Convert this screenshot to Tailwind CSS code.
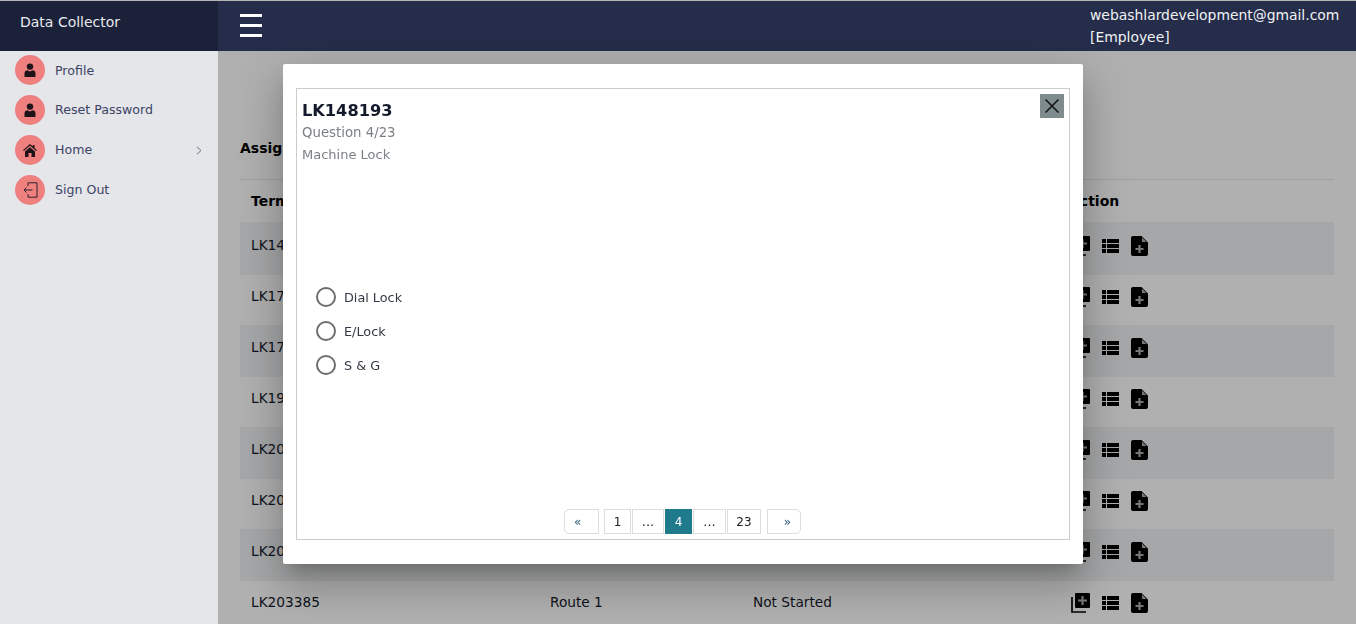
<!DOCTYPE html>
<html lang="en">
<head>
    <meta charset="UTF-8">
    <meta name="viewport" content="width=device-width, initial-scale=1.0">
    <title>Data Collector</title>
    <script src="https://cdn.jsdelivr.net/npm/@tailwindcss/browser@4"></script>
</head>
<body class="h-[624px] overflow-hidden bg-white font-['Verdana','DejaVu_Sans',sans-serif] text-[13px]">
    <!-- Top bar -->
    <header class="relative z-30 flex h-[51px] border-t border-[#b5b5b5] bg-[#252d4a] text-white">
        <div class="flex w-[218px] items-center bg-[#1b2139] pb-[7px] pl-5 text-[14px] text-[#e9eaee]">Data Collector</div>
        <div class="flex flex-1 items-center justify-between pl-[22px] pr-[17px]">
            <div class="flex w-[22px] flex-col gap-[7px] pb-[1px]">
                <span class="h-[3px] bg-white"></span>
                <span class="h-[3px] bg-white"></span>
                <span class="h-[3px] bg-white"></span>
            </div>
            <div class="w-[249px] pb-[1px] text-[13.9px] leading-[22px] text-[#f1f2f4]">
                <div>webashlardevelopment@gmail.com</div>
                <div>[Employee]</div>
            </div>
        </div>
    </header>

    <div class="flex h-[573px]">
        <!-- Sidebar -->
        <aside class="relative z-30 w-[218px] bg-[#e4e6ea] pl-[15px] pt-1 text-[12.6px] text-[#3d4465]">
            <a class="flex h-[30px] items-center gap-[10px]">
                <span class="flex h-[30px] w-[30px] items-center justify-center rounded-full bg-[#ee8080]">
                    <svg class="h-[14px] w-[12px]" viewBox="0 0 12 14" fill="#1d1318"><circle cx="6" cy="3.6" r="3.2"/><path d="M0.5 14V10.5Q0.5 7.5 3.5 7.3L6 8.5L8.5 7.3Q11.5 7.5 11.5 10.5V14Z"/></svg>
                </span>
                <span class="pt-[2px]">Profile</span>
            </a>
            <a class="mt-[10px] flex h-[30px] items-center gap-[10px]">
                <span class="flex h-[30px] w-[30px] items-center justify-center rounded-full bg-[#ee8080]">
                    <svg class="h-[14px] w-[12px]" viewBox="0 0 12 14" fill="#1d1318"><circle cx="6" cy="3.6" r="3.2"/><path d="M0.5 14V10.5Q0.5 7.5 3.5 7.3L6 8.5L8.5 7.3Q11.5 7.5 11.5 10.5V14Z"/></svg>
                </span>
                <span>Reset Password</span>
            </a>
            <a class="mt-[10px] flex h-[30px] items-center gap-[10px] pr-[16px]">
                <span class="flex h-[30px] w-[30px] items-center justify-center rounded-full bg-[#ee8080]">
                    <svg class="h-[13px] w-[14px]" viewBox="0 0 14 13" fill="#1d1318"><path d="M7 0L0 6.2L0.8 7.1L7 1.7L13.2 7.1L14 6.2L11.5 4V1H9.8V2.5Z"/><path d="M2 7.5L7 3.2L12 7.5V13H8.5V9H5.5V13H2Z"/></svg>
                </span>
                <span>Home</span>
                <svg class="ml-auto h-[9px] w-[6px]" viewBox="0 0 6 9" fill="none" stroke="#6b7080" stroke-width="1"><path d="M1 .8L5 4.5L1 8.2"/></svg>
            </a>
            <a class="mt-[10px] flex h-[30px] items-center gap-[10px]">
                <span class="flex h-[30px] w-[30px] items-center justify-center rounded-full bg-[#ee8080]">
                    <svg class="h-[16px] w-[15px]" viewBox="0 0 15 16" fill="none" stroke="#33222a" stroke-width="1"><path d="M5 4V.8H14V15.2H5V12"/><path d="M9.5 8H1M3.5 5.5L1 8L3.5 10.5"/></svg>
                </span>
                <span>Sign Out</span>
            </a>
        </aside>

        <!-- Page content -->
        <main class="relative flex-1 px-[22px] pt-[88px] text-[13.7px] text-[#141a2b]">
            <h2 class="text-[14px] font-bold leading-[18px] text-black">Assigned Terminals</h2>
            <div class="mt-[22px] border-t border-[#e6e6e6]">
                <div class="flex h-[42px] items-center px-[11px] text-[14px] font-bold text-black">
                    <span class="w-[299px]">Terminal ID</span>
                    <span class="w-[203px]">Route</span>
                    <span class="w-[314px]">Status</span>
                    <span class="pl-[2px]">Action</span>
                </div>
                <div id="rows"></div>
            </div>
        </main>
    </div>

    <!-- Dialog backdrop -->
    <div class="fixed inset-0 z-20 bg-black/[0.31]"></div>

    <!-- Dialog -->
    <div class="fixed left-[283px] top-[64px] z-40 h-[500px] w-[800px] rounded-[2px] bg-white px-[13px] py-[24px] shadow-[0_11px_15px_-7px_rgba(0,0,0,0.2),0_24px_38px_3px_rgba(0,0,0,0.14),0_9px_46px_8px_rgba(0,0,0,0.12)]">
        <div class="relative flex h-full flex-col border border-[#cccccc] px-[5px] pt-[11px]">
            <button class="absolute right-[5px] top-[5px] flex h-[24px] w-[24px] items-center justify-center bg-[#7f8c8d]">
                <svg class="h-[14px] w-[14px]" viewBox="0 0 14 14" fill="none" stroke="#111" stroke-width="1.5"><path d="M.5 .5L13.5 13.5M13.5 .5L.5 13.5"/></svg>
            </button>
            <h3 class="text-[16.2px] font-bold leading-[22px] text-[#141a2b]">LK148193</h3>
            <p class="text-[13.3px] leading-[22px] text-[#7c8085]">Question 4/23</p>
            <p class="leading-[21px] text-[#7c8085]">Machine Lock</p>

            <div class="mt-[122px] flex flex-col gap-[14px] pl-[14px] text-[12.8px] text-[#333a45]">
                <label class="flex h-[20px] items-center gap-[8px]"><span class="h-[20px] w-[20px] rounded-full border-2 border-[#6e6e6e]"></span><span class="pt-[2px]">Dial Lock</span></label>
                <label class="flex h-[20px] items-center gap-[8px]"><span class="h-[20px] w-[20px] rounded-full border-2 border-[#6e6e6e]"></span><span class="pt-[2px]">E/Lock</span></label>
                <label class="flex h-[20px] items-center gap-[8px]"><span class="h-[20px] w-[20px] rounded-full border-2 border-[#6e6e6e]"></span><span class="pt-[2px]">S &amp; G</span></label>
            </div>

            <nav class="absolute bottom-[5px] left-[267px] flex h-[25px] text-[12px] text-[#222]">
                <a class="flex w-[35px] items-center rounded-l-[5px] border border-[#dddddd] pl-[9px] text-[#2a5d78]">«</a>
                <a class="ml-[5px] flex w-[27px] items-center justify-center border border-[#dddddd]">1</a>
                <a class="ml-[1px] flex w-[32px] items-center justify-center border border-[#dddddd] text-[13px]">...</a>
                <a class="ml-[1px] flex w-[27px] items-center justify-center bg-[#1f7a8c] text-white">4</a>
                <a class="ml-[1px] flex w-[33px] items-center justify-center border border-[#dddddd] text-[13px]">...</a>
                <a class="ml-[1px] flex w-[34px] items-center justify-center border border-[#dddddd]">23</a>
                <a class="ml-[6px] flex w-[34px] items-center justify-end rounded-r-[5px] border border-[#dddddd] pr-[9px] text-[#2a5d78]">»</a>
            </nav>
        </div>
    </div>

    <script>
        // Terminal rows, striped on odd rows
        const terminals = [
            ['LK148193', 'flex h-[53px] items-center bg-[#f1f2f4] px-[11px] pb-[7px]'],
            ['LK170011', 'flex h-[50px] items-center px-[11px] pb-[8px]'],
            ['LK170022', 'flex h-[52px] items-center bg-[#f1f2f4] px-[11px] pb-[8px]'],
            ['LK190033', 'flex h-[50px] items-center px-[11px] pb-[8px]'],
            ['LK203381', 'flex h-[52px] items-center bg-[#f1f2f4] px-[11px] pb-[8px]'],
            ['LK203382', 'flex h-[50px] items-center px-[11px] pb-[8px]'],
            ['LK203384', 'flex h-[52px] items-center bg-[#f1f2f4] px-[11px] pb-[8px]'],
            ['LK203385', 'flex h-[44px] items-center px-[11px] pb-[2px]'],
        ];

        const actions = `
            <span class="flex items-center gap-[12px] pt-[2px]">
                <svg class="h-[20px] w-[19px]" viewBox="0 0 19 20"><path d="M5 0H18Q19 0 19 1V14Q19 15 18 15H5Q4 15 4 14V1Q4 0 5 0Z"/><path d="M11.5 3V12M7 7.5H16" stroke="#adadad" stroke-width="2.2"/><path d="M1 4V19H15" fill="none" stroke="#000" stroke-width="1.7"/></svg>
                <svg class="h-[14px] w-[17px]" viewBox="0 0 17 14"><path d="M0 0H4V4H0ZM5 0H17V4H5ZM0 5H4V9H0ZM5 5H17V9H5ZM0 10H4V14H0ZM5 10H17V14H5Z"/></svg>
                <svg class="h-[20px] w-[17px]" viewBox="0 0 17 20"><path d="M2 0H10.5L17 6.5V18Q17 20 15 20H2Q0 20 0 18V2Q0 0 2 0Z"/><path d="M11 1.5L15.5 6H11Z" fill="#adadad"/><path d="M8.5 9V17M4.5 13H12.5" stroke="#adadad" stroke-width="2.2"/></svg>
            </span>`;

        document.getElementById('rows').innerHTML = terminals.map(([id, rowClass]) => `
            <div class="${rowClass}">
                <span class="w-[299px]">${id}</span>
                <span class="w-[203px]">Route 1</span>
                <span class="w-[318px]">Not Started</span>
                ${actions}
            </div>`).join('');
    </script>
</body>
</html>
